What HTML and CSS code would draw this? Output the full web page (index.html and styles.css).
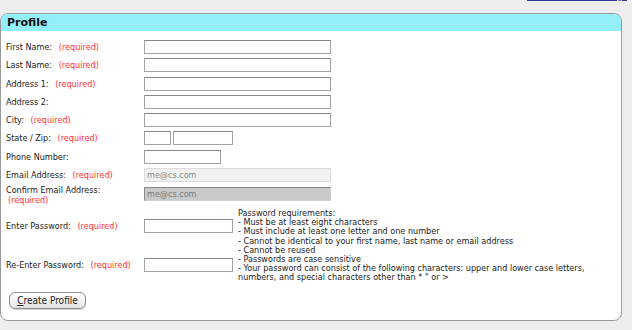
FILE: index.html
```html
<!DOCTYPE html>
<html>
<head>
<meta charset="utf-8">
<title>Profile</title>
<link rel="stylesheet" href="styles.css">
</head>
<body>
<div class="top"><a href="#" class="home-link">Return to Your Home Page</a></div>
<div class="panel">
  <div class="panel-head">Profile</div>
  <form class="form">
    <div class="row"><span class="label">First Name: <span class="req">(required)</span></span><input class="field wide" type="text"></div>
    <div class="row"><span class="label">Last Name: <span class="req">(required)</span></span><input class="field wide" type="text"></div>
    <div class="row"><span class="label">Address 1: <span class="req">(required)</span></span><input class="field wide" type="text"></div>
    <div class="row"><span class="label">Address 2:</span><input class="field wide" type="text"></div>
    <div class="row"><span class="label">City: <span class="req">(required)</span></span><input class="field wide" type="text"></div>
    <div class="row"><span class="label">State / Zip: <span class="req">(required)</span></span><input class="field state" type="text"><input class="field zip" type="text"></div>
    <div class="row"><span class="label">Phone Number:</span><input class="field phone" type="text"></div>
    <div class="row"><span class="label">Email Address: <span class="req">(required)</span></span><input class="field wide email" type="text" value="me@cs.com" readonly></div>
    <div class="row tall"><span class="label two">Confirm Email Address:<br><span class="req indent">(required)</span></span><input class="field wide confirm" type="text" value="me@cs.com" readonly></div>
    <div class="pw">
      <span class="label pw1">Enter Password: <span class="req">(required)</span></span>
      <input class="field pass pwin1" type="password">
      <div class="rules">Password requirements:<br>- Must be at least eight characters<br>- Must include at least one letter and one number<br>- Cannot be identical to your first name, last name or email address<br>- Cannot be reused<br>- Passwords are case sensitive<br>- Your password can consist of the following characters: upper and lower case letters,<br>numbers, and special characters other than * " or &gt;</div>
      <span class="label pw2">Re-Enter Password: <span class="req">(required)</span></span>
      <input class="field pass pwin2" type="password">
    </div>
    <button type="button" class="btn"><u>C</u>reate Profile</button>
  </form>
</div>
</body>
</html>
```
FILE: styles.css
```css
html, body {
  margin: 0;
  padding: 0;
  background: #eeeeee;
}
body {
  font-family: "DejaVu Sans Condensed", "Liberation Sans", sans-serif;
  font-size: 9px;
  color: #222;
  overflow: hidden;
}
.top {
  margin-top: -9px;
  height: 22px;
  line-height: 11px;
  text-align: right;
  padding-right: 5px;
}
.home-link {
  color: #33339a;
  font-size: 8.5px;
}
.panel {
  width: 620px;
  border: 1px solid #9a9a9a;
  border-radius: 8px;
  background: #fff;
}
.panel-head {
  height: 17px;
  line-height: 17px;
  background: #93f0f8;
  border-radius: 7px 7px 0 0;
  padding-left: 6px;
  font-family: "DejaVu Sans", sans-serif;
  font-weight: bold;
  font-size: 11px;
  color: #111;
}
.form {
  padding: 9px 0 11px 5px;
  margin: 0;
}
.row {
  display: flex;
  align-items: center;
  height: 14px;
  margin-bottom: 4.3px;
}
.row.tall {
  height: 20px;
  align-items: flex-start;
  margin-bottom: 2.6px;
}
.label {
  width: 138px;
  flex: none;
  white-space: nowrap;
}
.label.two {
  line-height: 10px;
  margin-top: -1.5px;
}
.req {
  color: #f33;
  margin-left: 4px;
}
.req.indent {
  margin-left: 2px;
}
.field {
  box-sizing: border-box;
  height: 14px;
  margin: 0;
  padding: 0 2px;
  border: 1px solid #a3a3a3;
  border-top-color: #878787;
  background: #fff;
  font-family: "DejaVu Sans Condensed", "Liberation Sans", sans-serif;
  font-size: 9px;
  color: #888;
  outline: none;
}
.wide { width: 187px; }
.state { width: 27px; margin-right: 2px; }
.zip { width: 60px; }
.phone { width: 77px; }
.email {
  background: #f1f1f1;
  border-color: #dcdcdc;
  color: #8a8a8a;
}
.confirm {
  background: #c9c9c9;
  border-color: #8a8a8a #cfcfcf #cfcfcf #8a8a8a;
  color: #7a7a7a;
  margin-top: 0.5px;
}
.pw {
  display: grid;
  grid-template-columns: 138px 94px auto;
  grid-template-rows: 34px 44px;
  align-items: center;
}
.pw1 { grid-row: 1; grid-column: 1; }
.pwin1 { grid-row: 1; grid-column: 2; }
.pw2 { grid-row: 2; grid-column: 1; }
.pwin2 { grid-row: 2; grid-column: 2; }
.pass { width: 89px; }
.rules {
  grid-row: 1 / 3;
  grid-column: 3;
  align-self: start;
  line-height: 9.2px;
  white-space: nowrap;
  color: #222;
}
.btn {
  margin: 5px 0 0 3px;
  width: 77px;
  height: 17px;
  padding: 0;
  border: 1px solid #8c8c8c;
  border-radius: 6px;
  background: linear-gradient(#ffffff, #f4f4f4 50%, #e2e2e2);
  box-shadow: 0 1px 0 #d8d8d8;
  font-family: "DejaVu Sans Condensed", "Liberation Sans", sans-serif;
  font-size: 10px;
  color: #222;
}
```
